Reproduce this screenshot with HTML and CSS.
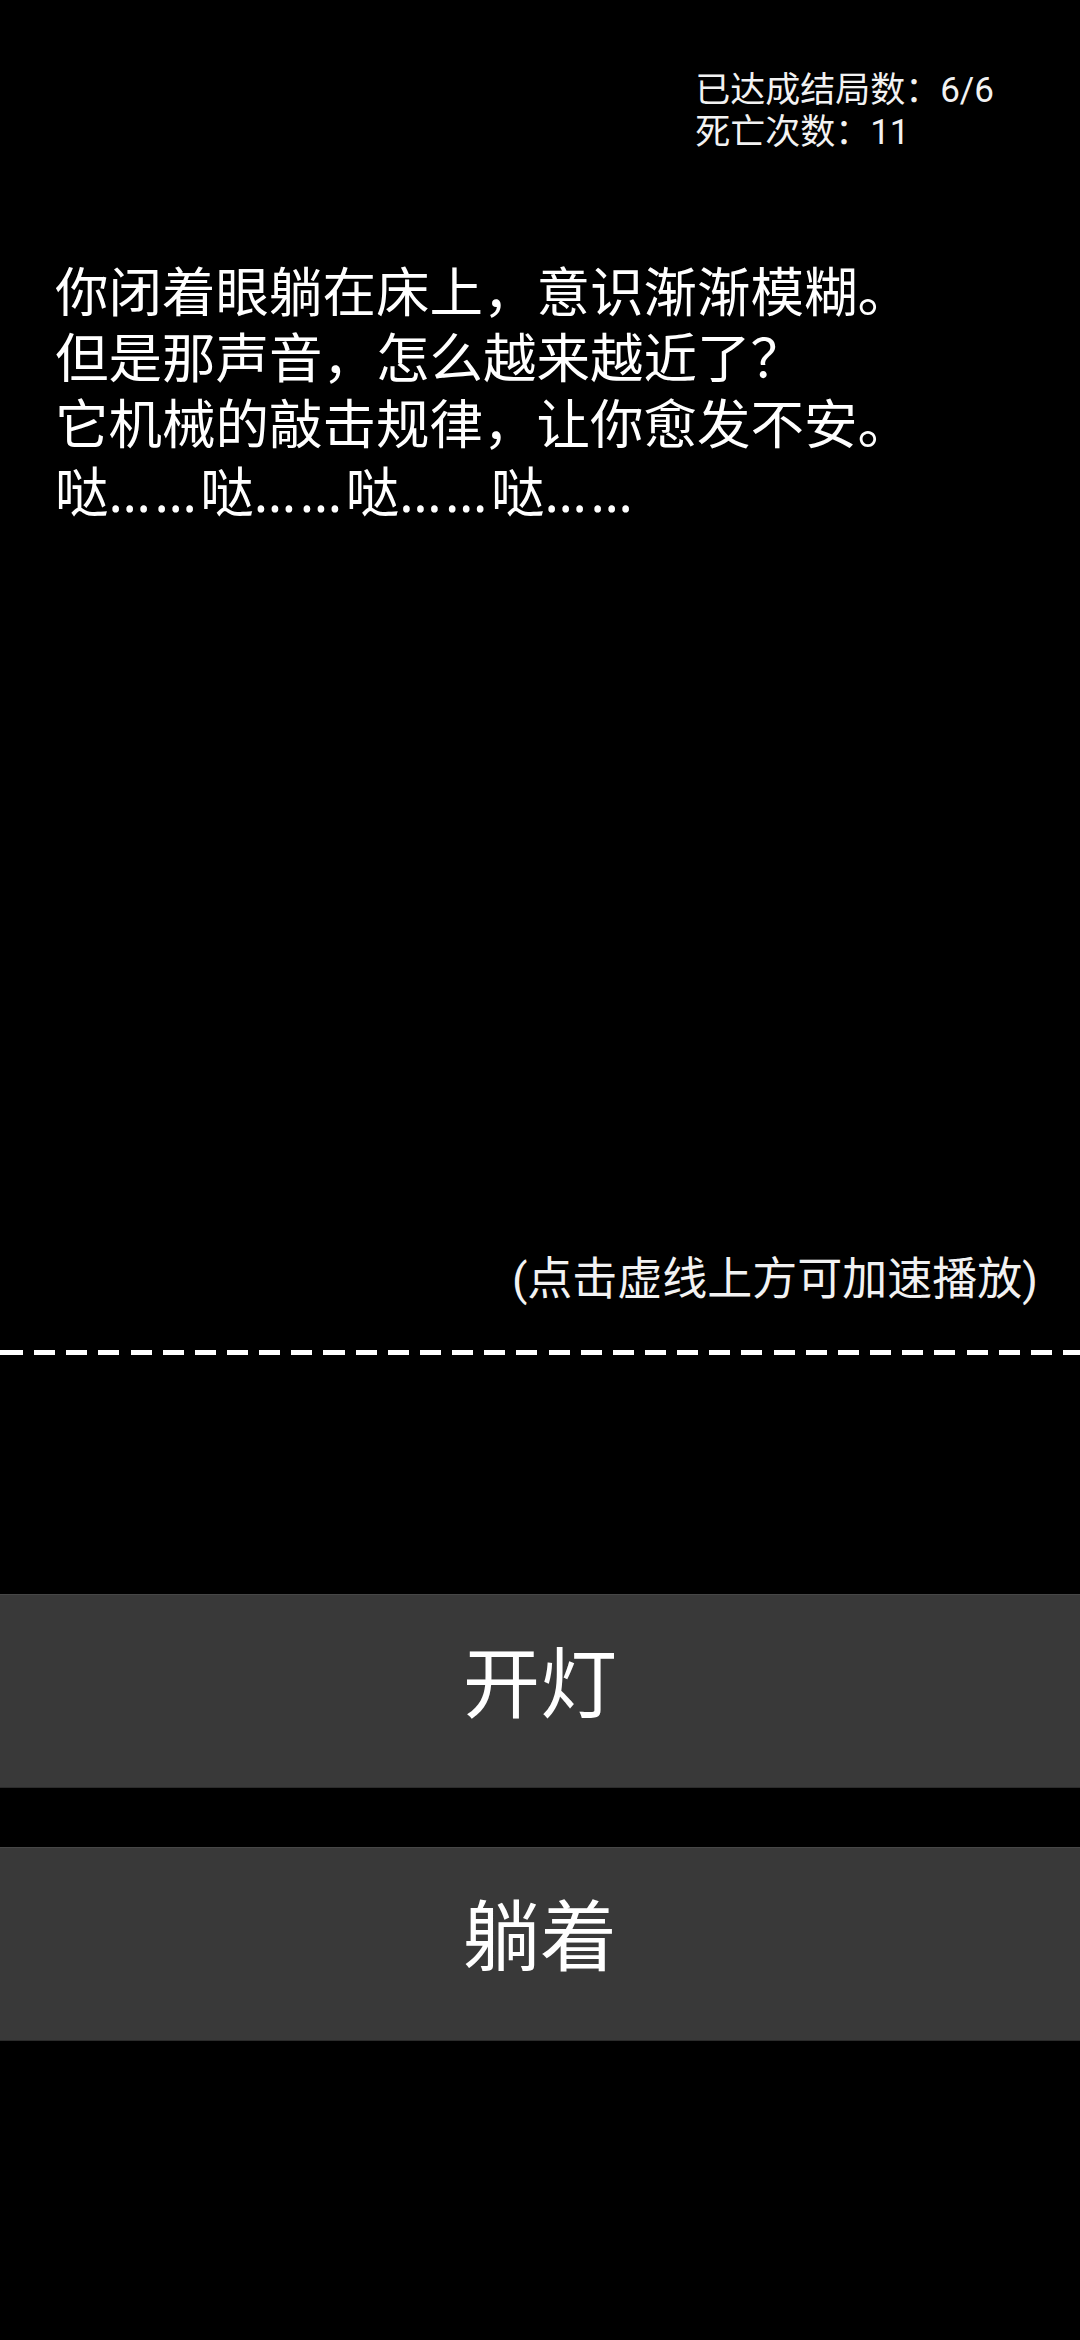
FILE: index.html
```html
<!DOCTYPE html>
<html lang="zh-CN">
<head>
<meta charset="utf-8">
<title>夜</title>
<link rel="stylesheet" href="styles.css">
</head>
<body>
<main class="screen">
  <header class="stats">
    <div class="stats-box">
      <p class="stat">已达成结局数：6/6</p>
      <p class="stat">死亡次数：11</p>
    </div>
  </header>

  <section class="story">
    <p class="line">你闭着眼躺在床上，意识渐渐模糊。</p>
    <p class="line">但是那声音，怎么越来越近了？</p>
    <p class="line">它机械的敲击规律，让你愈发不安。</p>
    <p class="line">哒<span class="dots">……</span>哒<span class="dots">……</span>哒<span class="dots">……</span>哒<span class="dots">……</span></p>
  </section>

  <p class="hint">(点击虚线上方可加速播放)</p>
  <div class="divider"></div>

  <nav class="choices">
    <button class="choice" type="button">开灯</button>
    <button class="choice" type="button">躺着</button>
  </nav>
</main>
</body>
</html>
```

FILE: styles.css
```css
html, body {
  margin: 0;
  padding: 0;
  background: #000;
}

body {
  font-family: Roboto, "Noto Sans CJK SC", sans-serif;
  color: #fff;
}

.screen {
  width: 1080px;
  height: 2340px;
  display: flex;
  flex-direction: column;
  background: #000;
  overflow: hidden;
}

p {
  margin: 0;
}

/* top-right counters */
.stats {
  display: flex;
  justify-content: flex-end;
  padding: 70px 86px 0 0;
}

.stat {
  font-size: 35px;
  line-height: 42px;
  color: #f2f2f2;
  white-space: nowrap;
}

/* narration */
.story {
  margin-top: 107px;
  padding-left: 55px;
}

.line {
  font-size: 53.5px;
  line-height: 66px;
  white-space: nowrap;
}

.dots {
  font-family: "Noto Sans", sans-serif;
  letter-spacing: 3.6px;
}

.hint {
  margin-top: 727px;
  padding-right: 42px;
  text-align: right;
  font-size: 45px;
  line-height: 52px;
  color: #f2f2f2;
}

/* dashed tap boundary */
.divider {
  margin-top: 44px;
  height: 5px;
  background-image: repeating-linear-gradient(
    to right,
    #fff 0,
    #fff 21px,
    transparent 21px,
    transparent 32.15px
  );
  background-position: 2px 0;
}

/* answer buttons */
.choices {
  margin-top: 239px;
  display: flex;
  flex-direction: column;
  gap: 59px;
}

.choice {
  display: flex;
  align-items: center;
  justify-content: center;
  width: 100%;
  height: 194px;
  margin: 0;
  padding: 0 0 26px;
  border: 0;
  border-top: 1px solid #474747;
  border-bottom: 1px solid #2b2b2b;
  background: #393939;
  color: #fff;
  font-family: inherit;
  font-size: 77px;
}
```
